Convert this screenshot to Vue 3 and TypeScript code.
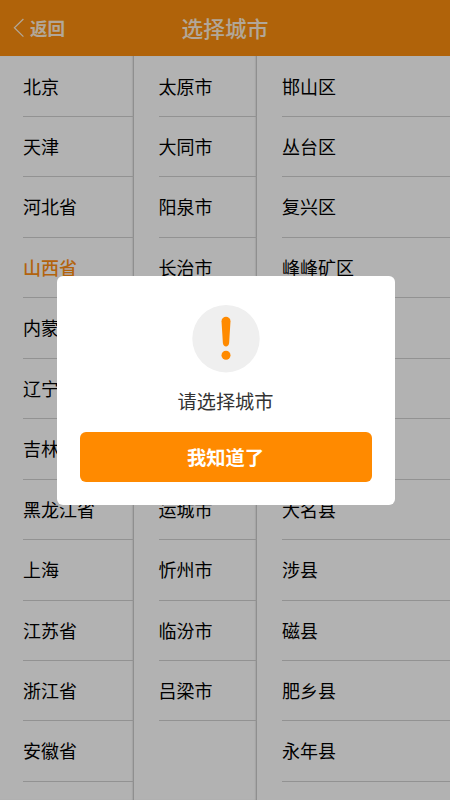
<script setup lang="ts">
import { ref } from 'vue'

const provinces: string[] = ['北京', '天津', '河北省', '山西省', '内蒙古', '辽宁省', '吉林省', '黑龙江省', '上海', '江苏省', '浙江省', '安徽省']
const cities: string[] = ['太原市', '大同市', '阳泉市', '长治市', '晋城市', '朔州市', '晋中市', '运城市', '忻州市', '临汾市', '吕梁市']
const districts: string[] = ['邯山区', '丛台区', '复兴区', '峰峰矿区', '邯郸县', '临漳县', '成安县', '大名县', '涉县', '磁县', '肥乡县', '永年县']
const selected = ref('山西省')
const dialogOpen = ref(true)
</script>

<template>
  <div class="screen">
    <header class="bar">
      <button class="back">
        <svg width="12" height="20" viewBox="0 0 12 20"><path d="M10.4 1 1.4 9.8l9 8.8" fill="none" stroke="currentColor" stroke-width="1.2" /></svg>
        <span>返回</span>
      </button>
      <h1>选择城市</h1>
    </header>
    <main class="columns">
      <ul class="col provinces">
        <li v-for="p in provinces" :key="p" :class="{ active: p === selected }" @click="selected = p">{{ p }}</li>
      </ul>
      <ul class="col cities">
        <li v-for="c in cities" :key="c">{{ c }}</li>
      </ul>
      <ul class="col districts">
        <li v-for="d in districts" :key="d">{{ d }}</li>
      </ul>
    </main>
    <div v-if="dialogOpen" class="mask">
      <section class="dialog">
        <svg class="alert" width="68" height="68" viewBox="0 0 68 68">
          <circle cx="34" cy="33.7" r="33.7" fill="#efefef" />
          <path d="M29.5 16.2c0-6 9-6 9 0l-1.4 21.8c-.3 4.6-5.9 4.6-6.2 0z" fill="#ff8a00" />
          <circle cx="34" cy="50.3" r="4.5" fill="#ff8a00" />
        </svg>
        <p>请选择城市</p>
        <button class="ok" @click="dialogOpen = false">我知道了</button>
      </section>
    </div>
  </div>
</template>

<style>
body { margin: 0; overflow: hidden; }
</style>

<style scoped>
.screen {
  position: relative;
  display: flex;
  flex-direction: column;
  width: 450px;
  height: 800px;
  overflow: hidden;
  background: #fff;
  font-family: "Noto Sans CJK SC", sans-serif;
}
button { border: 0; padding: 0; background: none; font-family: inherit; }
.bar {
  display: grid;
  grid-template-columns: 1fr auto 1fr;
  align-items: center;
  flex: none;
  height: 56px;
  box-sizing: border-box;
  padding: 0 13px 1px;
  background: #fd8f0f;
  color: #fff0dc;
}
.back { display: flex; align-items: center; gap: 5px; color: inherit; font-size: 17.5px; font-weight: 700; line-height: 24px; }
h1 { margin: 0; font-size: 21.7px; font-weight: 500; line-height: 30px; }
.columns { display: grid; grid-template-columns: 134px 123px 193px; flex: 1; min-height: 0; }
.col { margin: 0; padding: .6px 0 0 23px; list-style: none; overflow: hidden; background: #fff; }
.col li {
  height: 60.45px;
  box-sizing: border-box;
  border-bottom: 1px solid #d2d2d2;
  font-size: 18px;
  line-height: 58px;
  white-space: nowrap;
  color: #000;
}
.col li.active { color: #ff8f14; font-weight: 500; }
.provinces { box-shadow: inset -2px 0 2px -1px #bbb; }
.cities { padding-left: 24.5px; box-shadow: inset -2px 0 2px -1px #bbb; }
.districts { padding-left: 25px; }
.mask {
  position: absolute;
  inset: 0;
  display: flex;
  justify-content: center;
  align-items: flex-start;
  padding: 275.5px 0 0 2px;
  background: rgba(0, 0, 0, .3);
  box-sizing: border-box;
}
.dialog {
  display: flex;
  flex-direction: column;
  align-items: center;
  width: 338px;
  height: 229.5px;
  box-sizing: border-box;
  padding: 29px 23px 23px;
  border-radius: 6px;
  background: #fff;
}
.alert { flex: none; }
.dialog p { margin: 13px 0 0; padding-right: 1px; font-size: 19.2px; line-height: 30px; color: #333; }
.ok { width: 292.5px; height: 50.5px; margin-top: 16px; flex: none; border-radius: 6px; background: #ff8a00; color: #fff; font-size: 19.3px; font-weight: 700; line-height: 50px; padding: 0 1px 1px 0; }
</style>
